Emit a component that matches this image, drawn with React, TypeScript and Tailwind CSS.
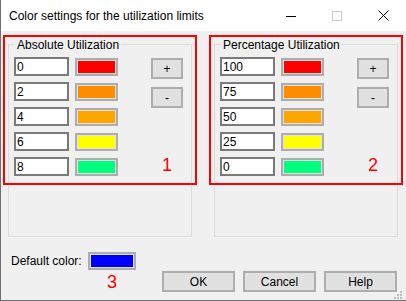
import React from 'react';

type Row = { value: string; swatch: string };

const absoluteRows: Row[] = [
  { value: '0', swatch: 'bg-[#ff0000]' },
  { value: '2', swatch: 'bg-[#ff8c00]' },
  { value: '4', swatch: 'bg-[#ffa500]' },
  { value: '6', swatch: 'bg-[#ffff00]' },
  { value: '8', swatch: 'bg-[#00ff7f]' },
];

const percentRows: Row[] = [
  { value: '100', swatch: 'bg-[#ff0000]' },
  { value: '75', swatch: 'bg-[#ff8c00]' },
  { value: '50', swatch: 'bg-[#ffa500]' },
  { value: '25', swatch: 'bg-[#ffff00]' },
  { value: '0', swatch: 'bg-[#00ff7f]' },
];

const ColorButton: React.FC<{ swatch: string; size: string }> = ({ swatch, size }) => (
  <div className={`${size} shrink-0 border-2 border-[#adadad] bg-[#e1e1e1] p-[1px]`}>
    <div className={`h-full w-full ${swatch}`} />
  </div>
);

const PushButton: React.FC<{ label: string; size: string; extra?: string }> = ({ label, size, extra }) => (
  <button
    className={`${size} ${extra ?? ''} flex items-center justify-center border-2 border-[#adadad] bg-[#e1e1e1] text-[12px] leading-none text-black`}
  >
    {label}
  </button>
);

const GroupBox: React.FC<{ title: string; rows: Row[]; mark: string }> = ({ title, rows, mark }) => (
  <div className="relative h-[193px] w-[184px] border border-[#dcdcdc]">
    <span className="absolute left-[6px] top-[-7px] bg-[#f0f0f0] px-[2px] text-[12px] leading-[15px] text-black">
      {title}
    </span>

    <div className="flex pl-[5px] pt-[12px]">
      <div className="flex flex-col gap-[6px]">
        {rows.map((r, i) => (
          <div key={i} className="flex h-[19px] items-center">
            <div className="flex h-[19px] w-[55px] items-center border-2 border-[#7a7a7a] bg-white pl-[1px] text-[12px] leading-none text-black">
              {r.value}
            </div>
            <div className="ml-[6px]">
              <ColorButton swatch={r.swatch} size="h-[18px] w-[43px]" />
            </div>
          </div>
        ))}
      </div>

      <div className="ml-[33px] flex w-[32px] flex-col items-center">
        <PushButton label="+" size="h-[21px] w-[32px]" extra="mt-[1px]" />
        <PushButton label="-" size="h-[21px] w-[32px]" extra="mt-[8px]" />
        <span className="mt-auto pb-[2px] text-[18px] leading-none text-[#ff0000]">{mark}</span>
      </div>
    </div>

    {/* annotation frame */}
    <div className="pointer-events-none absolute left-[-6px] top-[-10px] h-[150px] w-[194px] border-2 border-[#ff0000]" />
  </div>
);

const App: React.FC = () => {
  return (
    <div className="relative flex h-[301px] w-[406px] flex-col border-b border-l border-[#707070] bg-white font-['Liberation_Sans',Arial,sans-serif] text-black">
      {/* title bar */}
      <div className="flex h-[31px] shrink-0 items-center bg-white">
        <span className="pl-[8px] text-[12px] leading-none">Color settings for the utilization limits</span>
        <div className="ml-auto flex h-full">
          <div className="flex h-full w-[46px] items-center justify-center">
            <svg width="10" height="10" viewBox="0 0 10 10">
              <line x1="0" y1="5.5" x2="10" y2="5.5" stroke="#000" strokeWidth="1" />
            </svg>
          </div>
          <div className="flex h-full w-[46px] items-center justify-center">
            <svg width="10" height="10" viewBox="0 0 10 10">
              <rect x="0.5" y="0.5" width="9" height="9" fill="none" stroke="#cccccc" strokeWidth="1" />
            </svg>
          </div>
          <div className="flex h-full w-[46px] items-center justify-center">
            <svg width="11" height="11" viewBox="0 0 11 11">
              <path d="M0.5 0.5 L10.5 10.5 M10.5 0.5 L0.5 10.5" stroke="#000" strokeWidth="1" fill="none" />
            </svg>
          </div>
        </div>
      </div>

      {/* body */}
      <div className="flex flex-1 flex-col bg-[#f0f0f0]">
        <div className="flex gap-[22px] pl-[7px] pt-[13px]">
          <GroupBox title="Absolute Utilization" rows={absoluteRows} mark="1" />
          <GroupBox title="Percentage Utilization" rows={percentRows} mark="2" />
        </div>

        <div className="flex">
          <div className="ml-[10px] mt-[15px] flex items-start">
            <span className="h-[18px] w-[77px] text-[12px] leading-[18px]">Default color:</span>
            <div className="flex flex-col items-center">
              <ColorButton swatch="bg-[#0000ff]" size="h-[18px] w-[48px]" />
              <span className="mt-[3px] text-[18px] leading-none text-[#ff0000]">3</span>
            </div>
          </div>

          <div className="ml-auto mr-[9px] mt-[34px] flex gap-[8px]">
            <PushButton label="OK" size="h-[21px] w-[73px]" />
            <PushButton label="Cancel" size="h-[21px] w-[73px]" />
            <PushButton label="Help" size="h-[21px] w-[73px]" />
          </div>
        </div>
      </div>

      {/* size grip */}
      <svg className="absolute bottom-[1px] right-[4px]" width="8" height="8" viewBox="0 0 8 8">
        <rect x="6" y="0" width="2" height="2" fill="#bdbdbd" />
        <rect x="3" y="3" width="2" height="2" fill="#bdbdbd" />
        <rect x="6" y="3" width="2" height="2" fill="#bdbdbd" />
        <rect x="0" y="6" width="2" height="2" fill="#bdbdbd" />
        <rect x="3" y="6" width="2" height="2" fill="#bdbdbd" />
        <rect x="6" y="6" width="2" height="2" fill="#bdbdbd" />
      </svg>
    </div>
  );
};

export default App;
